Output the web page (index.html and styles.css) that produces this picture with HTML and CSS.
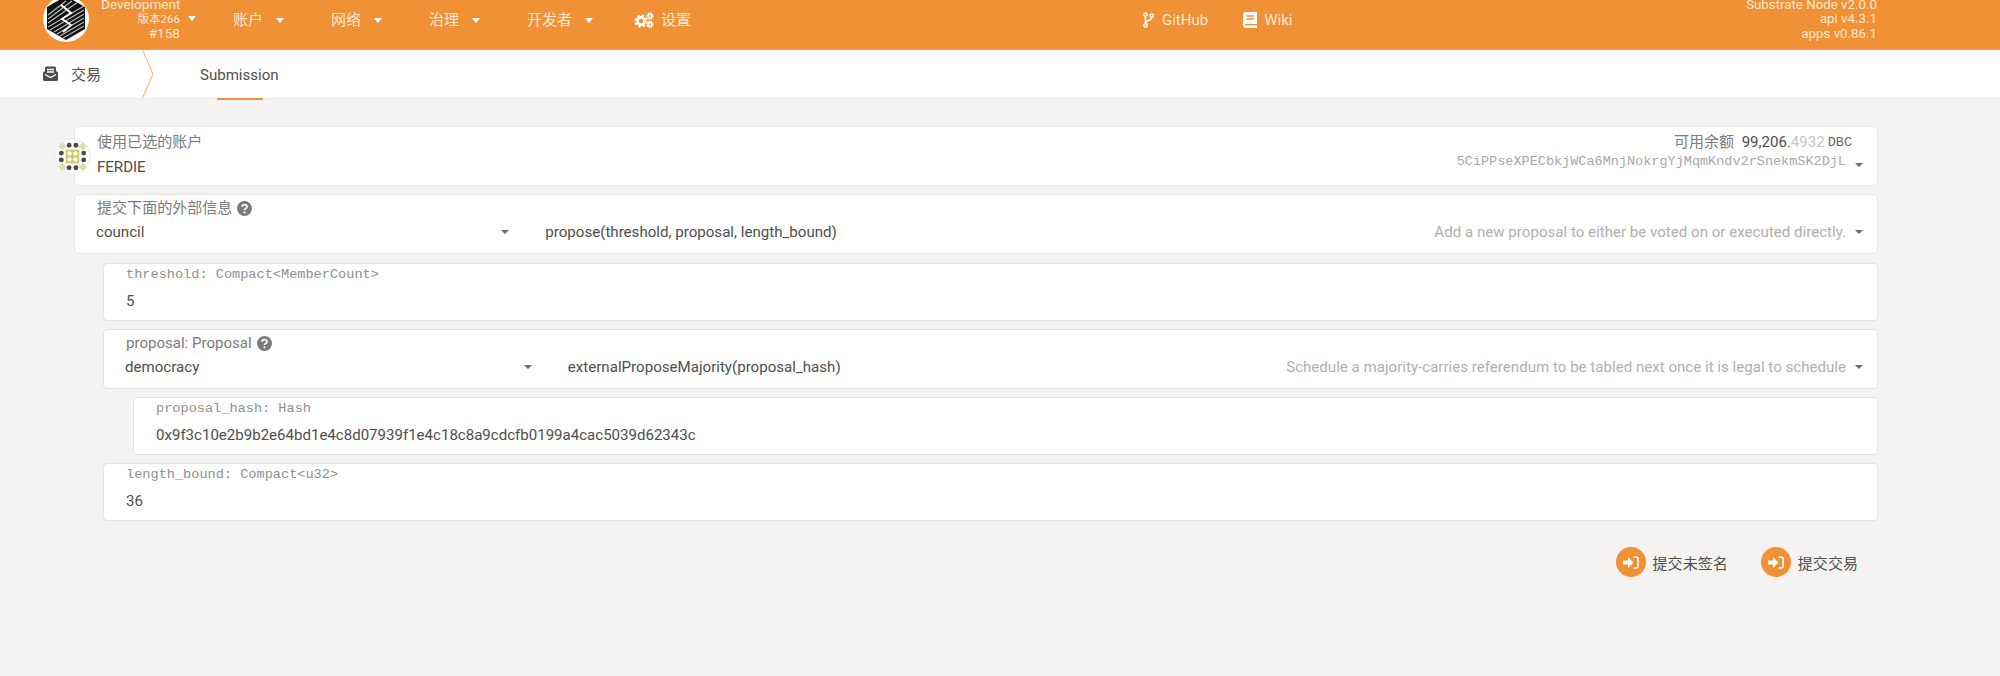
FILE: index.html
```html
<!DOCTYPE html>
<html lang="zh">
<head>
<meta charset="utf-8">
<title>Submission</title>
<link rel="stylesheet" href="styles.css">
</head>
<body>
<header class="topbar">
  <div class="logo">
    <svg width="48" height="60" viewBox="0 0 48 60">
      <ellipse cx="24" cy="24" rx="23" ry="23" fill="#fff"/>
      <polygon points="24,1 43,12 43,34 24,45 5,34 5,12" fill="#111"/>
      <g stroke="#bbb" stroke-width="1.2">
        <path d="M6 20 24 6M6 24 30 6M6 28 36 7M6 32 42 11M8 35 42 15M12 37 42 19M15 39 42 23M18 41 42 27M21 43 42 31"/>
      </g>
      <path d="M19 10 29 18 20 24 29 30 21 37" fill="none" stroke="#fff" stroke-width="2"/>
    </svg>
  </div>
  <div class="chain">
    <div class="chain-text">
      <div>Development</div>
      <div class="chain-version">版本266</div>
      <div>#158</div>
    </div>
    <i class="caret caret-white"></i>
  </div>
  <nav class="menu">
    <a class="menu-item menu-w1">账户<i class="caret caret-white"></i></a>
    <a class="menu-item menu-w1">网络<i class="caret caret-white"></i></a>
    <a class="menu-item menu-w1">治理<i class="caret caret-white"></i></a>
    <a class="menu-item menu-w2">开发者<i class="caret caret-white"></i></a>
    <a class="menu-item settings">
      <svg class="icon-cogs" width="20" height="16" viewBox="0 0 20 16">
        <circle cx="7" cy="9" r="3.6" fill="none" stroke="#fff" stroke-width="2.6"/>
        <circle cx="7" cy="9" r="5.6" fill="none" stroke="#fff" stroke-width="2" stroke-dasharray="2.4 2"/>
        <circle cx="16" cy="4" r="1.8" fill="none" stroke="#fff" stroke-width="1.6"/>
        <circle cx="16" cy="4" r="3.2" fill="none" stroke="#fff" stroke-width="1.2" stroke-dasharray="1.4 1.1"/>
        <circle cx="16" cy="12.4" r="1.8" fill="none" stroke="#fff" stroke-width="1.6"/>
        <circle cx="16" cy="12.4" r="3.2" fill="none" stroke="#fff" stroke-width="1.2" stroke-dasharray="1.4 1.1"/>
      </svg>
      设置
    </a>
  </nav>
  <div class="links">
    <a class="link-item link-github">
      <svg width="11" height="16" viewBox="0 0 11 16">
        <circle cx="2.5" cy="2.6" r="1.7" fill="none" stroke="#fff" stroke-width="1.5"/>
        <circle cx="2.5" cy="13.4" r="1.7" fill="none" stroke="#fff" stroke-width="1.5"/>
        <circle cx="8.7" cy="3.6" r="1.7" fill="none" stroke="#fff" stroke-width="1.5"/>
        <path d="M2.5 4.5V11.5M8.7 5.4C8.7 9 2.5 8 2.5 11.5" fill="none" stroke="#fff" stroke-width="1.6"/>
      </svg>
      GitHub
    </a>
    <a class="link-item">
      <svg width="14" height="16" viewBox="0 0 14 16">
        <path d="M2.5 0H14V16H2.5A2.5 2.5 0 0 1 0 13.5V2.5A2.5 2.5 0 0 1 2.5 0Z" fill="#fff"/>
        <path d="M3.5 4H11M3.5 7H11M2 12.6H14" stroke="#f19135" stroke-width="1.4"/>
      </svg>
      Wiki
    </a>
  </div>
  <div class="versions">
    <div>Substrate Node v2.0.0</div>
    <div>api v4.3.1</div>
    <div>apps v0.86.1</div>
  </div>
</header>

<div class="tabs">
  <div class="tab-root">
    <svg width="15" height="15" viewBox="0 0 15 15">
      <path d="M0 6.5 2 5V2A1.5 1.5 0 0 1 3.5.5h8A1.5 1.5 0 0 1 13 2v3l2 1.5V13.5A1.5 1.5 0 0 1 13.500 15h-12A1.500 1.500 0 0 1 0 13.500Z" fill="#4e4e4e"/>
      <path d="M4 3.500H11M4 6H11" stroke="#fff" stroke-width="1.400"/>
      <path d="M2 8.500 7.500 11.500 13 8.500" fill="none" stroke="#fff" stroke-width="1.400"/>
    </svg>
    <span>交易</span>
  </div>
  <svg class="tab-chevron" width="12" height="48" viewBox="0 0 12 48">
    <path d="M.5 0 11 24 .5 48" fill="none" stroke="#f19135" stroke-opacity=".75"/>
  </svg>
  <div class="tab-active">Submission</div>
</div>

<main class="content">
  <section class="card card-account">
    <svg class="avatar" width="37" height="37" viewBox="0 0 38 38">
      <circle cx="19" cy="19" r="18" fill="#fff" stroke="#e8e8e6"/>
      <g fill="#dbe0a6">
        <rect x="5.500" y="5.500" width="6" height="6" transform="rotate(45 8.500 8.500)"/>
        <rect x="26.500" y="5.500" width="6" height="6" transform="rotate(45 29.500 8.500)"/>
        <rect x="5.500" y="26.500" width="6" height="6" transform="rotate(45 8.500 29.500)"/>
        <rect x="26.500" y="26.500" width="6" height="6" transform="rotate(45 29.500 29.500)"/>
      </g>
      <rect x="12" y="12" width="14" height="14" fill="#cccb5c"/>
      <g fill="#fff">
        <circle cx="16" cy="16" r="2.300"/><circle cx="22" cy="16" r="2.300"/>
        <circle cx="16" cy="22" r="2.300"/><circle cx="22" cy="22" r="2.300"/>
      </g>
      <g fill="#4a4a4a">
        <circle cx="15.500" cy="7.500" r="2.500"/><circle cx="22.500" cy="7.500" r="2.500"/>
        <circle cx="15.500" cy="30.500" r="2.500"/><circle cx="22.500" cy="30.500" r="2.500"/>
        <circle cx="7.500" cy="15.500" r="2.500"/><circle cx="7.500" cy="22.500" r="2.500"/>
        <circle cx="30.500" cy="15.500" r="2.500"/><circle cx="30.500" cy="22.500" r="2.500"/>
      </g>
    </svg>
    <div class="account-left">
      <div class="label">使用已选的账户</div>
      <div class="account-name">FERDIE</div>
    </div>
    <div class="account-right">
      <div class="balance">
        <span class="balance-label">可用余额</span>
        <span class="balance-value">99,206.<span class="balance-frac">4932</span></span>
        <span class="balance-unit">DBC</span>
      </div>
      <div class="address-row">
        <span class="address">5CiPPseXPECbkjWCa6MnjNokrgYjMqmKndv2rSnekmSK2DjL</span>
        <i class="caret caret-grey"></i>
      </div>
    </div>
  </section>

  <section class="card card-select card-root">
    <div class="label label-help">提交下面的外部信息
      <svg class="help" width="15" height="15" viewBox="0 0 15 15"><circle cx="7.500" cy="7.500" r="7.500" fill="#7b7b7b"/><path d="M5 5.800C5 2.800 10 2.900 10 5.700 10 7.600 7.500 7.300 7.500 9" fill="none" stroke="#fff" stroke-width="1.700"/><circle cx="7.500" cy="11.300" r="1.100" fill="#fff"/></svg>
    </div>
    <div class="select-row">
      <div class="select-left"><span>council</span><i class="caret caret-dark"></i></div>
      <div class="select-right">
        <span class="select-name">propose(threshold, proposal, length_bound)</span>
        <span class="select-doc">Add a new proposal to either be voted on or executed directly.</span>
        <i class="caret caret-dark"></i>
      </div>
    </div>
  </section>

  <section class="card card-input indent-1">
    <div class="mono-label">threshold: Compact&lt;MemberCount&gt;</div>
    <div class="value">5</div>
  </section>

  <section class="card card-select indent-1">
    <div class="label label-help">proposal: Proposal
      <svg class="help" width="15" height="15" viewBox="0 0 15 15"><circle cx="7.500" cy="7.500" r="7.500" fill="#7b7b7b"/><path d="M5 5.800C5 2.800 10 2.900 10 5.700 10 7.600 7.500 7.300 7.500 9" fill="none" stroke="#fff" stroke-width="1.700"/><circle cx="7.500" cy="11.300" r="1.100" fill="#fff"/></svg>
    </div>
    <div class="select-row">
      <div class="select-left"><span>democracy</span><i class="caret caret-dark"></i></div>
      <div class="select-right">
        <span class="select-name">externalProposeMajority(proposal_hash)</span>
        <span class="select-doc">Schedule a majority-carries referendum to be tabled next once it is legal to schedule</span>
        <i class="caret caret-dark"></i>
      </div>
    </div>
  </section>

  <section class="card card-input indent-2">
    <div class="mono-label">proposal_hash: Hash</div>
    <div class="value">0x9f3c10e2b9b2e64bd1e4c8d07939f1e4c18c8a9cdcfb0199a4cac5039d62343c</div>
  </section>

  <section class="card card-input indent-1">
    <div class="mono-label">length_bound: Compact&lt;u32&gt;</div>
    <div class="value">36</div>
  </section>

  <div class="actions">
    <button class="action">
      <span class="action-icon"><svg width="16" height="13" viewBox="0 0 16 13"><path d="M0 4.500H5V1L10.500 6.500 5 12V8.500H0Z" fill="#fff"/><path d="M10.500 1H13A2 2 0 0 1 15 3V10A2 2 0 0 1 13 12H10.500" fill="none" stroke="#fff" stroke-width="1.600"/></svg></span>
      提交未签名
    </button>
    <button class="action">
      <span class="action-icon"><svg width="16" height="13" viewBox="0 0 16 13"><path d="M0 4.500H5V1L10.500 6.500 5 12V8.500H0Z" fill="#fff"/><path d="M10.500 1H13A2 2 0 0 1 15 3V10A2 2 0 0 1 13 12H10.500" fill="none" stroke="#fff" stroke-width="1.600"/></svg></span>
      提交交易
    </button>
  </div>
</main>
</body>
</html>
```
FILE: styles.css
```css
* { box-sizing: border-box; }
html, body { margin: 0; padding: 0; height: 100%; overflow: hidden; }
body {
  background: #f4f3f2;
  color: #4e4e4e;
  font-family: Roboto, "Noto Sans CJK SC", sans-serif;
  font-size: 15.050px;
}
.topbar {
  display: flex;
  align-items: flex-start;
  height: 50px;
  background: #f19135;
  border-bottom: 1px solid #f99b3f;
  color: #fff;
  overflow: hidden;
}
.logo { margin-left: 42px; width: 48px; height: 49px; margin-top: -5px; flex: none; }
.chain { display: flex; align-items: center; margin-left: 11px; width: 96px; margin-top: -3px; flex: none; }
.chain-text { width: 79px; text-align: right; font-size: 13.600px; line-height: 14.600px; color: #fde8d2; }
.chain-version { font-size: 11.500px; }
.chain .caret { margin-left: 8px; }
.caret { display: inline-block; width: 0; height: 0; border-left: 4.500px solid transparent; border-right: 4.500px solid transparent; border-top: 5.500px solid #fff; flex: none; }
.caret-grey, .caret-dark { border-top-color: #6b6b6b; border-left-width: 4px; border-right-width: 4px; border-top-width: 4.500px; }
.menu { display: flex; align-items: center; margin-left: 36px; margin-top: 9px; color: #fde8d2; line-height: 22px; }
.menu-item { display: flex; align-items: center; }
.menu-item .caret { margin-left: 13px; }
.menu-w1 { width: 98px; }
.menu-w2 { width: 107px; }
.settings { gap: 7px; }
.links { display: flex; align-items: center; position: absolute; left: 1143px; top: 11px; gap: 35px; color: #fde8d2; }
.link-item { display: flex; align-items: center; gap: 7px; font-size: 15px; }
.link-github { gap: 8px; }
.versions { margin-left: auto; margin-right: 123px; text-align: right; font-size: 13.300px; line-height: 14.800px; color: #fde8d2; margin-top: -2.500px; }
.tabs { display: flex; align-items: center; height: 48px; background: #fff; position: relative; box-shadow: 0 1px 1px rgba(0,0,0,.04); }
.tab-root { display: flex; align-items: center; gap: 13px; margin-left: 43px; width: 99px; margin-top: -1px; }
.tab-chevron { flex: none; }
.tab-active { margin-left: 46px; position: relative; height: 48px; line-height: 50px; }
.tab-active::after { content: ""; position: absolute; left: 17px; right: 16px; bottom: -2px; height: 2px; background: #f19135; }
.content { padding: 28px 122px 0 74px; }
.card { background: #fff; border: 1px solid #e4e4e2; border-radius: 4px; margin-bottom: 8px; position: relative; }
.card-root { margin-bottom: 9px; }
.indent-1 { margin-left: 29px; }
.indent-2 { margin-left: 59px; }
.card-account { height: 60px; display: flex; justify-content: space-between; padding: 5px 14px 0 22px; }
.avatar { position: absolute; left: -21px; top: 11px; }
.label { color: #7b7b7b; line-height: 21px; }
.account-name { margin: 4px 0 0; line-height: 20px; }
.account-right { display: flex; flex-direction: column; align-items: flex-end; }
.balance { display: flex; align-items: center; line-height: 21px; margin-right: 11px; }
.balance-label { color: #7b7b7b; margin-right: 7.500px; }
.balance-frac { color: #c4c4c4; }
.balance-unit { font-family: "Liberation Mono", monospace; font-size: 13.500px; margin-left: 3px; color: #666; }
.address-row { display: flex; align-items: center; margin-top: 1px; }
.address { font-family: "Liberation Mono", monospace; font-size: 13.520px; color: #a8a8a8; line-height: 16px; }
.address-row .caret { margin-left: 9px; margin-top: 6px; }
.card-select { height: 60px; padding: 3px 14px 0 21px; }
.label-help { display: flex; align-items: center; gap: 5px; margin-left: 1px; }
.select-row { display: flex; align-items: center; margin-top: 3px; line-height: 20px; font-size: 15.100px; }
.select-left { display: flex; align-items: center; justify-content: space-between; width: calc(22.400% + 17.500px); flex: none; }
.select-right { flex: 1; display: flex; align-items: center; margin-left: 36px; }
.select-doc { margin-left: auto; margin-right: 9px; color: #b0b0b0; }
.card-input { height: 58px; padding: 2px 22px 0; }
.mono-label { font-family: "Liberation Mono", monospace; font-size: 13.600px; color: #8f8f8f; line-height: 18px; }
.value { margin-top: 7px; line-height: 20px; }
.actions { display: flex; justify-content: flex-end; gap: 33px; margin-top: 26px; padding-right: 20px; }
.action { display: flex; align-items: center; gap: 7px; background: none; border: 0; padding: 0; font: inherit; color: #4e4e4e; }
.action-icon { display: flex; align-items: center; justify-content: center; width: 30px; height: 30px; border-radius: 50%; background: #f19135; }
```
